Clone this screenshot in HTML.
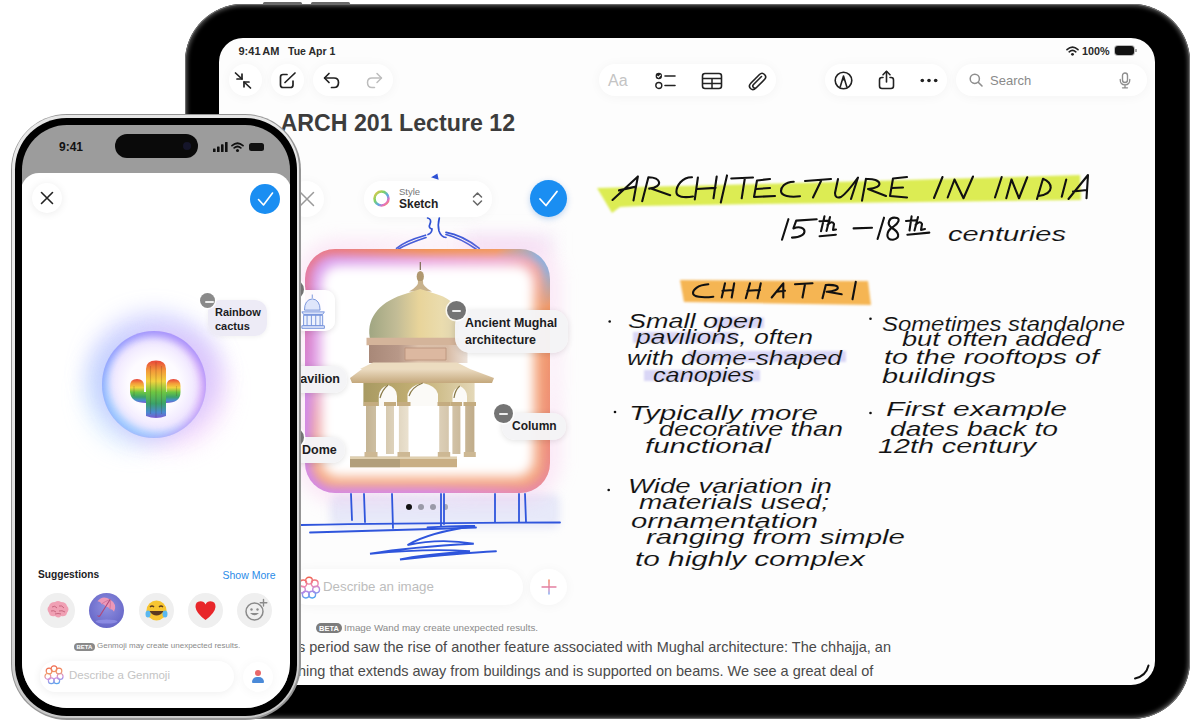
<!DOCTYPE html>
<html><head><meta charset="utf-8">
<style>
*{box-sizing:border-box;margin:0;padding:0}
html,body{width:1200px;height:725px;overflow:hidden;background:#fff;font-family:"Liberation Sans",sans-serif}
.a{position:absolute}
#ipad{position:absolute;left:185px;top:4px;width:1005px;height:715px;border-radius:58px;background:#000;box-shadow:inset 0 0 0 0.8px #777, inset 0 0 4px 2px #5c5c5c}
#screen{position:absolute;left:219px;top:38px;width:936px;height:647px;border-radius:24px;background:#fdfdfd;overflow:hidden}
.pg{position:absolute;left:-219px;top:-38px;width:1200px;height:725px}
#iphone{position:absolute;left:10.7px;top:113.7px;width:290.3px;height:606.1px;border-radius:56px;background:#959595}
#irim{position:absolute;left:1.6px;top:1.8px;right:1.8px;bottom:2px;border-radius:54px;background:linear-gradient(180deg,#e6e6e6,#ececec 30%,#dedede 70%,#c8c8c8)}
#ibez{position:absolute;left:4.6px;top:4.8px;right:4.1px;bottom:4px;border-radius:51.5px;background:#000}
#iscreen{position:absolute;left:11.6px;top:11.1px;width:267.4px;height:583.4px;border-radius:45px;background:#9c9c9c;overflow:hidden}
.pg2{position:absolute;left:-22.3px;top:-124.8px;width:1200px;height:725px}
.pill{position:absolute;background:#fff;border-radius:20px;box-shadow:0 1px 12px rgba(0,0,0,0.045)}
.t{position:absolute;white-space:nowrap;line-height:1}
svg{position:absolute;overflow:visible}
.lbl{position:absolute;background:rgba(244,244,246,0.97);border-radius:14px;box-shadow:0 1px 6px rgba(0,0,0,0.12);font-weight:bold;font-size:12px;color:#1c1c1e;white-space:nowrap;line-height:15px}
.minus{position:absolute;width:19px;height:19px;border-radius:50%;background:#747474;box-shadow:0 0 0 1.5px rgba(255,255,255,0.8)}
.minus:after{content:"";position:absolute;left:5px;top:8.5px;width:9px;height:2px;background:#eee;border-radius:1px}
.hw{position:absolute;white-space:nowrap;font-family:"Liberation Sans",sans-serif;font-style:italic;color:#111;line-height:1}
</style></head>
<body>
<!-- iPad -->
<div class="a" style="left:263px;top:2.2px;width:39px;height:3.5px;background:#6a6a6a;border-radius:1.5px"></div>
<div class="a" style="left:311px;top:2.2px;width:39px;height:3.5px;background:#6a6a6a;border-radius:1.5px"></div>
<div id="ipad"></div>
<div id="screen"><div class="pg">
  <!-- status bar -->
  <div class="t" style="left:238.5px;top:46px;font-size:11px;font-weight:bold;color:#2a2a2a">9:41<span style="letter-spacing:-0.5px">&#8239;</span>AM</div><div class="t" style="left:288px;top:46.3px;font-size:10.5px;font-weight:bold;color:#2a2a2a">Tue Apr 1</div>
  <svg style="left:1066px;top:46px" width="13" height="10" viewBox="0 0 13 10"><path d="M1 3.6 Q6.5 -1.2 12 3.6" stroke="#222" stroke-width="1.7" fill="none" stroke-linecap="round"/><path d="M3.2 5.8 Q6.5 3 9.8 5.8" stroke="#222" stroke-width="1.7" fill="none" stroke-linecap="round"/><circle cx="6.5" cy="8.3" r="1.4" fill="#222"/></svg>
  <div class="t" style="left:1082px;top:46px;font-size:10.8px;font-weight:bold;color:#2a2a2a">100%</div>
  <div class="a" style="left:1115px;top:46px;width:19px;height:9px;border-radius:3px;background:#111;box-shadow:0 0 0 1px #bbb"></div>
  <div class="a" style="left:1135px;top:49px;width:1.5px;height:3px;background:#aaa"></div>

  <!-- toolbar left -->
  <div class="pill" style="left:229px;top:64px;width:33px;height:32px;border-radius:16px"></div>
  <div class="pill" style="left:271px;top:64px;width:33px;height:32px;border-radius:16px"></div>
  <div class="pill" style="left:313px;top:64px;width:80px;height:32px;border-radius:16px"></div>
  <svg style="left:234px;top:72px" width="18" height="17" viewBox="0 0 18 17"><g stroke="#222" stroke-width="1.7" fill="none" stroke-linecap="round" stroke-linejoin="round"><path d="M1.5 1 L8 7"/><path d="M3 7 H8 V2.2"/><path d="M16.5 16 L10 10"/><path d="M10 14.8 V10 H15"/></g></svg>
  <svg style="left:279px;top:72px" width="18" height="17" viewBox="0 0 18 17"><g stroke="#222" stroke-width="1.7" fill="none" stroke-linecap="round" stroke-linejoin="round"><path d="M8 2.5 H4 Q1.5 2.5 1.5 5 V13 Q1.5 15.5 4 15.5 H11.5 Q14 15.5 14 13 V9"/><path d="M6 10.5 L16 1"/></g></svg>
  <svg style="left:323px;top:72px" width="18" height="17" viewBox="0 0 18 17"><g stroke="#222" stroke-width="1.7" fill="none" stroke-linecap="round" stroke-linejoin="round"><path d="M6 1.5 L1.5 6 L6 10.5"/><path d="M1.8 6 H11 Q15.5 6 15.5 10.5 Q15.5 15.5 11 15.5 H8.5"/></g></svg>
  <svg style="left:366px;top:72px" width="18" height="17" viewBox="0 0 18 17"><g stroke="#bdbdbd" stroke-width="1.5" fill="none" stroke-linecap="round" stroke-linejoin="round"><path d="M11 1.5 L15.5 6 L11 10.5"/><path d="M15.2 6 H6 Q1.5 6 1.5 10.5 Q1.5 15.5 6 15.5 H8.5"/></g></svg>

  <!-- toolbar middle -->
  <div class="pill" style="left:599px;top:64px;width:177px;height:32px;border-radius:16px"></div>
  <div class="t" style="left:608px;top:73px;font-size:16px;color:#c4c4c4">Aa</div>
  <svg style="left:655px;top:72px" width="22" height="18" viewBox="0 0 22 18"><circle cx="3.8" cy="4" r="3.2" fill="#222"/><path d="M2.2 4 L3.5 5.3 L5.6 2.8" stroke="#fff" stroke-width="1.1" fill="none"/><circle cx="3.8" cy="13.5" r="3" fill="none" stroke="#222" stroke-width="1.4"/><path d="M10 4 H20 M10 13.5 H20" stroke="#222" stroke-width="1.6" stroke-linecap="round"/></svg>
  <svg style="left:701px;top:72px" width="22" height="18" viewBox="0 0 22 18"><rect x="1.5" y="1.5" width="19" height="15" rx="2.5" fill="none" stroke="#222" stroke-width="1.6"/><path d="M1.5 6.5 H20.5 M1.5 11.5 H20.5 M11 6.5 V16.5" stroke="#222" stroke-width="1.5"/></svg>
  <svg style="left:747px;top:71px" width="20" height="20" viewBox="0 0 20 20"><path d="M14.5 5.5 L6.5 13.5 Q5 15 6.5 16.5 Q8 18 9.5 16.5 L17.5 8.5 Q20 6 17.5 3.5 Q15 1 12.5 3.5 L4 12 Q1 15 3.5 17.5 Q6 20 9 17" stroke="#222" stroke-width="1.6" fill="none" stroke-linecap="round"/></svg>

  <!-- toolbar right -->
  <div class="pill" style="left:825px;top:64px;width:122px;height:32px;border-radius:16px"></div>
  <svg style="left:834px;top:71px" width="19" height="19" viewBox="0 0 19 19"><circle cx="9.5" cy="9.5" r="8.3" fill="none" stroke="#222" stroke-width="1.6"/><path d="M6 16.5 L9.5 5 L13 16.5" fill="none" stroke="#222" stroke-width="1.6" stroke-linejoin="round"/><path d="M8.2 9.5 L9.5 5.5 L10.8 9.5 Z" fill="#222"/></svg>
  <svg style="left:878px;top:70px" width="17" height="20" viewBox="0 0 17 20"><g stroke="#222" stroke-width="1.6" fill="none" stroke-linecap="round" stroke-linejoin="round"><path d="M5 7.5 H3.8 Q1.5 7.5 1.5 10 V16 Q1.5 18.5 4 18.5 H13 Q15.5 18.5 15.5 16 V10 Q15.5 7.5 13.2 7.5 H12"/><path d="M8.5 12 V1.5"/><path d="M5 4.8 L8.5 1.3 L12 4.8"/></g></svg>
  <svg style="left:920px;top:78px" width="18" height="5" viewBox="0 0 18 5"><circle cx="2.3" cy="2.5" r="1.8" fill="#222"/><circle cx="9" cy="2.5" r="1.8" fill="#222"/><circle cx="15.7" cy="2.5" r="1.8" fill="#222"/></svg>

  <!-- search -->
  <div class="pill" style="left:956px;top:64px;width:191px;height:32px;border-radius:16px"></div>
  <svg style="left:969px;top:73px" width="14" height="14" viewBox="0 0 14 14"><circle cx="5.8" cy="5.8" r="4.6" fill="none" stroke="#8e8e8e" stroke-width="1.5"/><path d="M9.2 9.2 L13 13" stroke="#8e8e8e" stroke-width="1.6" stroke-linecap="round"/></svg>
  <div class="t" style="left:990px;top:74px;font-size:13px;color:#8a8a8a">Search</div>
  <svg style="left:1119px;top:72px" width="12" height="17" viewBox="0 0 12 17"><rect x="3.5" y="1" width="5" height="9.5" rx="2.5" fill="none" stroke="#8e8e8e" stroke-width="1.4"/><path d="M1.2 7.5 Q1.2 12.8 6 12.8 Q10.8 12.8 10.8 7.5 M6 12.8 V15.8 M3.5 15.8 H8.5" fill="none" stroke="#8e8e8e" stroke-width="1.3" stroke-linecap="round"/></svg>

  <!-- title -->
  <div class="t" style="left:280.5px;top:112.3px;font-size:23.2px;font-weight:bold;color:#3c3c3c">ARCH 201 Lecture 12</div>

    <!-- ===== Image wand ===== -->
  <!-- lavender wash -->
  <div class="a" style="left:330px;top:494px;width:230px;height:34px;background:rgba(190,195,240,0.35);filter:blur(4px);border-radius:8px"></div>
  <div class="a" style="left:465px;top:232px;width:90px;height:22px;background:rgba(235,205,240,0.35);filter:blur(8px)"></div>
  <!-- sketch lines above -->
  <svg style="left:380px;top:160px" width="120" height="100" viewBox="380 160 120 100"><g stroke="#2f52d6" stroke-width="1.7" fill="none" stroke-linecap="round">
    <path d="M434 177 L436.5 175.5 L437 178 Z" fill="#2f52d6" stroke-width="2.5"/>
    <path d="M427.6 218 Q432 219 430 224 Q428 228 432 229 Q432 233 428 234.5"/>
    <path d="M439.3 218 Q437.5 225 439 231 Q441 237 446 237.5"/>
    <path d="M396.5 248.3 Q405 241 425.5 235.2"/><path d="M398.5 249 Q408 243.5 426 237.5"/>
    <path d="M446 232.4 Q462 235 479.3 248.3"/><path d="M446 234.5 Q460 238 476 249"/>
  </g></svg>
  <!-- X button -->
  <div class="pill" style="left:288px;top:181px;width:36px;height:36px;border-radius:18px"></div>
  <svg style="left:299px;top:191px" width="16" height="16" viewBox="0 0 16 16"><path d="M1.5 1.5 L14.5 14.5 M14.5 1.5 L1.5 14.5" stroke="#9a9a9a" stroke-width="1.5" stroke-linecap="round"/></svg>
  <!-- style pill -->
  <div class="pill" style="left:364px;top:181px;width:128px;height:36px;border-radius:18px;background:rgba(255,255,255,0.96)"></div>
  <svg style="left:372px;top:189px" width="19" height="19" viewBox="0 0 19 19"><circle cx="9.5" cy="9.5" r="7" fill="none" stroke="url(#rg1)" stroke-width="2.6"/><defs><linearGradient id="rg1" x1="0" y1="0" x2="1" y2="1"><stop offset="0" stop-color="#f5c542"/><stop offset="0.35" stop-color="#7bd36a"/><stop offset="0.6" stop-color="#5aa9e6"/><stop offset="0.8" stop-color="#e96fc0"/><stop offset="1" stop-color="#f59a3a"/></linearGradient></defs></svg>
  <div class="t" style="left:399px;top:187px;font-size:9.5px;color:#777">Style</div>
  <div class="t" style="left:399px;top:198px;font-size:12px;font-weight:bold;color:#222">Sketch</div>
  <svg style="left:472px;top:191px" width="11" height="16" viewBox="0 0 11 16"><path d="M1.5 6 L5.5 2 L9.5 6 M1.5 10 L5.5 14 L9.5 10" stroke="#666" stroke-width="1.5" fill="none" stroke-linecap="round" stroke-linejoin="round"/></svg>
  <!-- blue check -->
  <div class="a" style="left:530px;top:180px;width:37px;height:37px;border-radius:50%;background:#1a8ef2;box-shadow:0 2px 6px rgba(0,90,200,0.25)"></div>
  <svg style="left:538px;top:189px" width="21" height="19" viewBox="0 0 21 19"><path d="M2 10 L8 16.5 L19 2.5" stroke="#fff" stroke-width="1.8" fill="none" stroke-linecap="round" stroke-linejoin="round"/></svg>

  <!-- card -->
  <div class="a" style="left:296px;top:238px;width:266px;height:266px;border-radius:42px;background:radial-gradient(closest-side,rgba(255,160,230,0) 80%,rgba(248,180,232,0.25) 100%);filter:blur(8px)"></div>
  <div class="a" style="left:305px;top:249px;width:245px;height:244px;border-radius:30px;overflow:hidden;background:conic-gradient(from 0deg,#f2944c 0deg,#f39a58 30deg,#8ab2e0 44deg,#90b0dc 50deg,#f09a6a 62deg,#ee8c7a 120deg,#e48cc0 150deg,#d88ae4 180deg,#d48ae6 220deg,#d08ae8 260deg,#e07ab0 300deg,#ec7c80 322deg,#f2944c 360deg)">
    <div class="a" style="left:6px;top:6px;width:233px;height:232px;border-radius:24px;filter:blur(4px);background:conic-gradient(from 0deg,#e8a0e0 0deg,#eea6cc 35deg,#f4a070 60deg,#f3a27e 120deg,#f6a880 180deg,#f5aa84 225deg,#e29ee2 270deg,#d89cec 320deg,#e8a0e0 360deg);"></div>
    <div class="a" style="left:20px;top:20px;width:205px;height:204px;border-radius:14px;background:#fff;box-shadow:0 0 7px 4px rgba(255,255,255,0.95);filter:blur(5px)"></div>
  </div>
  <!-- pavilion -->
  <svg style="left:340px;top:255px" width="160" height="215" viewBox="340 255 160 215">
    <defs>
      <linearGradient id="dome" x1="0" y1="0" x2="1" y2="0"><stop offset="0" stop-color="#a0a682"/><stop offset="0.3" stop-color="#c2bc96"/><stop offset="0.55" stop-color="#e8d49a"/><stop offset="0.8" stop-color="#eadcae"/><stop offset="1" stop-color="#dcd2b0"/></linearGradient>
      <linearGradient id="col" x1="0" y1="0" x2="1" y2="0"><stop offset="0" stop-color="#c4b494"/><stop offset="0.45" stop-color="#f0e8d8"/><stop offset="1" stop-color="#c0ac8a"/></linearGradient>
      <linearGradient id="chh" x1="0" y1="0" x2="0" y2="1"><stop offset="0" stop-color="#ecdcc2"/><stop offset="1" stop-color="#c4a87c"/></linearGradient>
      <linearGradient id="drum" x1="0" y1="0" x2="1" y2="0"><stop offset="0" stop-color="#a88878"/><stop offset="0.3" stop-color="#b89888"/><stop offset="0.5" stop-color="#dcc0aa"/><stop offset="0.8" stop-color="#d8bca6"/><stop offset="1" stop-color="#ece2da"/></linearGradient>
      <linearGradient id="arch" x1="0" y1="0" x2="1" y2="0"><stop offset="0" stop-color="#a89a62"/><stop offset="0.5" stop-color="#c4b074"/><stop offset="1" stop-color="#e4d8b8"/></linearGradient>
    </defs>
    <path d="M420.3 262 L420.3 270" stroke="#7a6a50" stroke-width="1.2"/>
    <ellipse cx="420.3" cy="276.5" rx="3.6" ry="5.5" fill="#b09870"/>
    <path d="M418 281 Q419 286 409 291.5 L432 291.5 Q422 286 423 281 Z" fill="#c8b28c"/>
    <path d="M370.6 341 C365 320 378 303 402 295 Q413 291.5 420.3 289 Q428 291.5 439 295 C462 303 463 320 456 338 Z" fill="url(#dome)"/>
    <path d="M366.5 337.8 H459 V345.2 H366.5 Z" fill="#d4b49a"/>
    <path d="M369 345 H467.5 V363 H369 Z" fill="url(#drum)"/>
    <path d="M405 348 H446 V360 H405 Z" fill="#dcb8a0" stroke="#b89078" stroke-width="0.8"/>
    <path d="M373 362.5 H457 L470 369 H360 Z" fill="#ecdcc0"/>
    <path d="M350 378 L362 369 H470 L494 378 L492 383 H352 Z" fill="url(#chh)"/>
    <path d="M363.4 383 H474.6 V406 H363.4 Z" fill="url(#arch)"/>
    <path d="M378.75 406 V396 Q379 388 388 385 Q397 388 397 396 V406 Z M407.5 406 V394 Q409 386 422.75 383 Q436.5 386 438 394 V406 Z M452.5 406 V396 Q453 389 459.75 386 Q466.5 389 467 396 V406 Z" fill="#fbfaf7"/>
    <path d="M388 385 Q382 390 380 398 M422.75 383 Q412 387 409 396 M459.75 386 Q455 390 454 398" stroke="#8a7a48" stroke-width="1.2" fill="none"/>
    <path d="M366 404 H376 V456 H366 Z M386 404 H394 V454 H386 Z M398.9 404 H408.5 V456 H398.9 Z M439.2 404 H448.8 V456 H439.2 Z M452.4 404 H460.4 V454 H452.4 Z M465.2 404 H474.4 V456 H465.2 Z" fill="url(#col)"/>
    <path d="M364 402 H378 V406 H364 Z M384 402 H396 V406 H384 Z M397 402 H410.5 V406 H397 Z M437.5 402 H450.5 V406 H437.5 Z M451 402 H462 V406 H451 Z M463.5 402 H476 V406 H463.5 Z" fill="#c4ac80"/>
    <path d="M364.5 452 H377.5 V457 H364.5 Z M397.5 452 H410 V457 H397.5 Z M437.8 452 H450.2 V457 H437.8 Z M463.8 452 H475.8 V457 H463.8 Z" fill="#cdb894"/>
    <path d="M350 456.8 H457 V467.3 H350 Z" fill="#c9ae84"/>
    <path d="M350 456.8 H400 V467.3 H350 Z" fill="#a89878" opacity="0.7"/>
    <path d="M350 456.8 H457 V459 H350 Z" fill="#e0d0b0"/>
  </svg>
  <!-- thumbnail -->
  <div class="a" style="left:294px;top:290px;width:41px;height:41px;border-radius:10px;background:rgba(255,255,255,0.94);box-shadow:0 1px 6px rgba(0,0,0,0.12)"></div>
  <svg style="left:301px;top:291px" width="26" height="40" viewBox="0 0 30 42"><g stroke="#6a8ad8" stroke-width="1" fill="#dfe6fb"><path d="M13 2 V6"/><path d="M4 20 Q4 8 13 7 Q22 8 22 20 Z"/><path d="M1 22 H27 L25 25 H3 Z"/><path d="M3 26 H25 V38 H3 Z" fill="#eef2fd"/><path d="M7 26 V38 M12 26 V38 M17 26 V38 M22 26 V38"/><path d="M1 38 H27 V41 H1 Z"/></g></svg>
  <!-- labels -->
  <div class="lbl" style="left:455px;top:310px;width:113px;height:43px;padding:5px 0 0 10px;border-radius:15px;font-size:12.4px;line-height:16.5px">Ancient Mughal<br>architecture</div>
  <div class="minus" style="left:447px;top:301px"></div>
  <div class="lbl" style="left:285px;top:366px;width:62px;height:27px;padding:6px 0 0 7px;border-radius:13px;font-size:12.5px">Pavilion</div>
  <div class="lbl" style="left:290px;top:437px;width:55px;height:26px;padding:6px 0 0 12px;border-radius:13px;font-size:12.5px">Dome</div>
  <div class="lbl" style="left:502px;top:413px;width:64px;height:27px;padding:6px 0 0 10px;border-radius:13px">Column</div>
  <div class="minus" style="left:494px;top:404px"></div>
  <div class="minus" style="left:285px;top:280px"></div>
  <div class="minus" style="left:285px;top:428px"></div>
  <!-- dots -->
  <div class="a" style="left:406px;top:504px;width:6px;height:6px;border-radius:50%;background:#111"></div>
  <div class="a" style="left:418px;top:504px;width:6px;height:6px;border-radius:50%;background:#9a9aa8"></div>
  <div class="a" style="left:430px;top:504px;width:6px;height:6px;border-radius:50%;background:#9a9aa8"></div>
  <div class="a" style="left:443px;top:504px;width:5px;height:6px;border-radius:50%;background:#a8a8b8"></div>
  <!-- sketch lines below -->
  <svg style="left:290px;top:490px" width="280" height="75" viewBox="0 0 280 75"><g stroke="#2f55dc" stroke-width="1.8" fill="none" stroke-linecap="round">
    <path d="M61 4 L62 30 M74 4 L75 32 M102 4 L103 38 M151 4 L151 36 M154 4 L154 34 M205 4 L205 32 M229 4 L229 32 M235 4 L236 32"/>
    <path d="M11 35 Q120 33 270 32.5"/><path d="M20 42.5 Q100 40 150 38.75 Q170 38 186 37.5"/>
    <path d="M137.5 37.5 Q165 35.5 185 36 Q140 42 117.5 55 Q150 48 183.75 53.75 Q120 57 80 63.75 Q140 58 180 61.25 Q130 65 110 69.5 Q170 63 206 61.25"/>
  </g></svg>
  <!-- describe pill -->
  <div class="pill" style="left:290px;top:569px;width:233px;height:36px;border-radius:18px"></div>
  <svg style="left:295px;top:574px" width="28" height="28" viewBox="0 0 28 28"><defs><linearGradient id="ai1" gradientUnits="userSpaceOnUse" x1="12" y1="3" x2="16" y2="25"><stop offset="0" stop-color="#f0604a"/><stop offset="0.4" stop-color="#f08ab0"/><stop offset="0.65" stop-color="#b08ae8"/><stop offset="1" stop-color="#40a8f0"/></linearGradient></defs><g fill="none" stroke="url(#ai1)" stroke-width="1.4"><circle cx="14.00" cy="6.70" r="3.4"/><circle cx="19.71" cy="9.45" r="3.4"/><circle cx="21.12" cy="15.62" r="3.4"/><circle cx="17.17" cy="20.58" r="3.4"/><circle cx="10.83" cy="20.58" r="3.4"/><circle cx="6.88" cy="15.62" r="3.4"/><circle cx="8.29" cy="9.45" r="3.4"/></g></svg>
  <div class="t" style="left:323px;top:579.5px;font-size:13.3px;color:#bdbdbd">Describe an image</div>
  <div class="pill" style="left:530px;top:569px;width:37px;height:36px;border-radius:18px"></div>
  <svg style="left:541px;top:579px" width="16" height="16" viewBox="0 0 16 16"><defs><linearGradient id="pl" x1="0" y1="0" x2="0" y2="1"><stop offset="0" stop-color="#f07850"/><stop offset="0.6" stop-color="#e080b0"/><stop offset="1" stop-color="#70a0f0"/></linearGradient></defs><path d="M8 1 V15 M1 8 H15" stroke="url(#pl)" stroke-width="1.3" stroke-linecap="round"/></svg>
  <!-- beta -->
  <div class="a" style="left:316px;top:623px;width:26px;height:10px;border-radius:5px;background:#7c7c7c"></div>
  <div class="t" style="left:319px;top:624.5px;font-size:7.5px;font-weight:bold;color:#fff">BETA</div>
  <div class="t" style="left:344px;top:622.5px;font-size:9.8px;color:#8a8a8a">Image Wand may create unexpected results.</div>

    <!-- ===== Notes handwriting ===== -->
  <svg style="left:0;top:0" width="1200" height="725" viewBox="0 0 1200 725">
    <defs><filter id="hb" x="-5%" y="-30%" width="110%" height="160%"><feGaussianBlur stdDeviation="1.2"/></filter></defs>
    <!-- highlights -->
    <path d="M597 188 L760 184 L1080 175 L1081 200 L760 204 L640 206 L620 207 L612 213 Z" fill="#dcec52" filter="url(#hb)"/>
    <path d="M680 280 L868 281 L871 305 L684 302 Z" fill="#f5b552" filter="url(#hb)"/>
    <g fill="#d9d6f6" filter="url(#hb)">
      <path d="M713 317.5 H764 V328 H713 Z"/>
      <path d="M633 332 H737 V343 H633 Z"/>
      <path d="M688 351 H846 V362 H688 Z"/>
      <path d="M644 370 H760 V381 H644 Z"/>
    </g>
    <g stroke="#111" stroke-width="2.1" fill="none" stroke-linecap="round" stroke-linejoin="round">
      <!-- ARCHITECTURE IN INDIA -->
      <path d="M612.5 200 L637.9 176.4 L633.5 200.4 M619 190.4 L634.8 186.9"/>
      <path d="M648.4 177.2 L642.2 201.3 M648.4 177.2 C661 177 664 187 649.2 188.6 M651 188.6 L670.2 195.2"/>
      <path d="M692 177.2 C682 177 676.4 186 676.4 192 C676.4 197 684 198 693 196.5"/>
      <path d="M697.9 177.5 L694.8 199.4 M716.7 176.5 L713.5 198.3 M696.9 189 L715.6 187.9"/>
      <path d="M727 175.4 L720.8 202.5"/>
      <path d="M731.25 178.5 L753 177.5 M744.8 178.5 L741.7 198.3"/>
      <path d="M770 179 L757 180.5 L754 197 L775 196 M756 189 L770 188"/>
      <path d="M793.75 181.7 C784 182 781 188 781 191 C781 196 790 197.5 800 196.25"/>
      <path d="M805 181 L831 179 M821 181 L813 197.5"/>
      <path d="M838 179 L835 193 Q835 199 841 197 Q847 193 858 177.5 L851 199"/>
      <path d="M866 178.75 L862 200.6 M866 179 C882 178 885 188 868 189 M868 189 L886 196"/>
      <path d="M907 177 L893 178.5 L890 196 L907 197.5 M892 188 L903 187.5"/>
      <path d="M942.5 177 L934 198"/>
      <path d="M954.5 179.5 L947.7 197.5 M954.5 179.5 L963.5 198.25 L973 176.5"/>
      <path d="M1001.7 177 L995 197.5"/>
      <path d="M1011.5 179.5 L1006.25 198.25 M1011.5 179.5 L1019 198.25 L1027.25 177.25"/>
      <path d="M1043 178.75 L1037 199 M1043 178.75 C1052 182.5 1056 193 1038.5 196"/>
      <path d="M1066.25 179.5 L1061.75 196.75"/>
      <path d="M1068.5 199 L1088 175 L1086.5 198.25 M1073 191.5 L1087 190"/>
      <!-- CHHATRI -->
      <path d="M708.3 284.2 C697 285 693 290 693 293 C693 297 702 298 713.3 296.7"/>
      <path d="M725 283.3 L721.7 297.5 M734.2 283.3 L731.7 297.5 M722.5 290.8 L733.3 290"/>
      <path d="M750 283.3 L745.8 298.3 M760.8 283.3 L757.5 298.3 M747.5 290.8 L760 290"/>
      <path d="M771.7 297.5 L783.3 283.3 L783.3 297.5 M776.7 291.7 L785 290.8"/>
      <path d="M795 284.2 L812.5 283.3 M805 284.2 L802.5 297.5"/>
      <path d="M825.8 285 L822.5 298.3 M825.8 285 C841.7 284.2 841.7 290.8 826.7 291.7 M827.5 291.7 L841.7 294.2"/>
      <path d="M855.8 281.7 L852.5 299.2"/>
      <!-- 15th - 18th -->
      <path d="M788.4 219.2 L782 239.7"/>
      <path d="M816.7 219.2 L796.2 220.6 L793.4 228.4 C806.8 223.4 810 237.6 792 237.6"/>
      <path d="M824.5 216.3 L821 231.2 M819.5 221.3 L829.5 220.6 M830 217 L826.5 231 M827.5 225 Q832 220 834 224 L833 230 L836 229.5 M819.6 236.2 L835.9 234.7"/>
      <path d="M853.6 228.4 L872 227.7"/>
      <path d="M884 217.7 L877.6 239"/>
      <path d="M897 218 C889 216 886 224 892 228 C899 232 901 238 893 239.7 C885 240 886 231 893 227 C899 223 900 219 897 218"/>
      <path d="M911.6 216.3 L909.5 230.5 M906 221 L916 220.3 M918 217 L914.5 230.5 M915.5 225 Q920 220 922 224 L921 230 L925 229 M907.4 234.7 L929.3 232.6"/>

    </g>
    <g fill="#111">
      <circle cx="609.7" cy="321.5" r="1.3"/><circle cx="615" cy="412" r="1.3"/><circle cx="608.7" cy="490" r="1.3"/>
      <circle cx="870.5" cy="318.8" r="1.3"/><circle cx="870.5" cy="413" r="1.3"/>
    </g>
    <g font-family="Liberation Sans" font-style="italic" font-size="21" fill="#111" stroke="#fcfcfc" stroke-width="0.1" lengthAdjust="spacingAndGlyphs">
      <text x="948" y="241" textLength="118" lengthAdjust="spacingAndGlyphs" font-size="20">centuries</text>

      <text x="628" y="328" textLength="135" lengthAdjust="spacingAndGlyphs">Small open</text>
      <text x="636" y="344" textLength="177" lengthAdjust="spacingAndGlyphs">pavilions, often</text>
      <text x="627" y="365" textLength="215" lengthAdjust="spacingAndGlyphs">with dome-shaped</text>
      <text x="653" y="382" textLength="101" lengthAdjust="spacingAndGlyphs">canopies</text>
      <text x="629" y="420" textLength="189" lengthAdjust="spacingAndGlyphs">Typically more</text>
      <text x="659" y="436" textLength="184" lengthAdjust="spacingAndGlyphs">decorative than</text>
      <text x="645" y="453" textLength="126" lengthAdjust="spacingAndGlyphs">functional</text>
      <text x="628" y="493" textLength="204" lengthAdjust="spacingAndGlyphs">Wide variation in</text>
      <text x="639" y="509" textLength="190" lengthAdjust="spacingAndGlyphs">materials used;</text>
      <text x="631" y="528" textLength="187" lengthAdjust="spacingAndGlyphs">ornamentation</text>
      <text x="646" y="544" textLength="259" lengthAdjust="spacingAndGlyphs">ranging from simple</text>
      <text x="635" y="566" textLength="230" lengthAdjust="spacingAndGlyphs">to highly complex</text>

      <text x="882" y="331" textLength="243" lengthAdjust="spacingAndGlyphs">Sometimes standalone</text>
      <text x="902" y="346" textLength="189" lengthAdjust="spacingAndGlyphs">but often added</text>
      <text x="884" y="364" textLength="215" lengthAdjust="spacingAndGlyphs">to the rooftops of</text>
      <text x="882" y="383" textLength="114" lengthAdjust="spacingAndGlyphs">buildings</text>
      <text x="886" y="416" textLength="181" lengthAdjust="spacingAndGlyphs">First example</text>
      <text x="890" y="436" textLength="168" lengthAdjust="spacingAndGlyphs">dates back to</text>
      <text x="878" y="453" textLength="158" lengthAdjust="spacingAndGlyphs">12th century</text>
    </g>
  </svg>


  <svg style="left:1130px;top:660px" width="25" height="25" viewBox="1130 660 25 25"><path d="M1148.5 665.5 Q1146 676 1135 678.5" stroke="#111" stroke-width="2" fill="none" stroke-linecap="round"/></svg>
  <!-- body text -->
  <div class="t" style="left:298px;top:640px;font-size:14.5px;color:#4a4a4a">s period saw the rise of another feature associated with Mughal architecture: The chhajja, an</div>
  <div class="t" style="left:298px;top:663.5px;font-size:14.5px;color:#4a4a4a">hing that extends away from buildings and is supported on beams. We see a great deal of</div>
</div></div>

<!-- iPhone -->
<div id="iphone"><div id="irim"></div><div id="ibez"></div><div id="iscreen"><div class="pg2">
  <div class="t" style="left:59px;top:141px;font-size:12px;font-weight:bold;color:#111">9:41</div>
  <div class="a" style="left:115px;top:134px;width:83px;height:24px;border-radius:12px;background:#0a0a0a"></div>
  <div class="a" style="left:183px;top:142px;width:8px;height:8px;border-radius:50%;background:#15152a"></div>
  <!-- status icons -->
  <svg style="left:213px;top:142px" width="15" height="10" viewBox="0 0 15 10"><g fill="#111"><rect x="0" y="6.5" width="2.6" height="3.5" rx="0.6"/><rect x="4" y="4.5" width="2.6" height="5.5" rx="0.6"/><rect x="8" y="2.3" width="2.6" height="7.7" rx="0.6"/><rect x="12" y="0" width="2.6" height="10" rx="0.6"/></g></svg>
  <svg style="left:231px;top:142px" width="13" height="10" viewBox="0 0 13 10"><path d="M1 3.6 Q6.5 -1.2 12 3.6" stroke="#111" stroke-width="1.8" fill="none" stroke-linecap="round"/><path d="M3.2 5.9 Q6.5 3 9.8 5.9" stroke="#111" stroke-width="1.8" fill="none" stroke-linecap="round"/><circle cx="6.5" cy="8.5" r="1.5" fill="#111"/></svg>
  <div class="a" style="left:249px;top:143px;width:15px;height:8px;border-radius:2.5px;background:#111"></div>
  <!-- sheet -->
  <div class="a" style="left:21px;top:173px;width:270px;height:560px;border-radius:18px;background:#fff"></div>
  <div class="a" style="left:32px;top:183px;width:30px;height:30px;border-radius:50%;background:#fff;box-shadow:0 1px 8px rgba(0,0,0,0.08)"></div>
  <svg style="left:40px;top:191px" width="14" height="14" viewBox="0 0 14 14"><path d="M1.5 1.5 L12.5 12.5 M12.5 1.5 L1.5 12.5" stroke="#222" stroke-width="1.6" stroke-linecap="round"/></svg>
  <div class="a" style="left:250px;top:184px;width:30px;height:30px;border-radius:50%;background:#1a8ef2"></div>
  <svg style="left:257px;top:191px" width="17" height="16" viewBox="0 0 17 16"><path d="M1.5 8.5 L6.5 14 L15.5 2" stroke="#fff" stroke-width="1.6" fill="none" stroke-linecap="round" stroke-linejoin="round"/></svg>
  <!-- cactus bubble -->
  <div class="a" style="left:88px;top:312px;width:132px;height:124px;border-radius:50%;background:rgba(120,125,255,0.30);filter:blur(11px)"></div>
  <div class="a" style="left:110px;top:330px;width:118px;height:120px;border-radius:50%;background:rgba(235,150,245,0.26);filter:blur(11px)"></div>
  <div class="a" style="left:84px;top:340px;width:100px;height:110px;border-radius:50%;background:rgba(140,200,255,0.24);filter:blur(11px)"></div>
  <div class="a" style="left:102px;top:331px;width:104px;height:107px;border-radius:50%;background:radial-gradient(closest-side,#fdfbff 50%,#f0e8ff 80%,#d8d0ff 100%);box-shadow:inset 0 5px 8px rgba(110,120,255,0.55),inset -5px 2px 9px rgba(240,140,240,0.55),inset 5px -5px 9px rgba(110,200,255,0.6)"></div>
  <svg style="left:126px;top:356px" width="60" height="66" viewBox="126 356 60 66">
    <defs><linearGradient id="rb" x1="0" y1="0" x2="0" y2="1"><stop offset="0" stop-color="#e8453a"/><stop offset="0.18" stop-color="#f39a3a"/><stop offset="0.36" stop-color="#f2d23e"/><stop offset="0.55" stop-color="#6cc642"/><stop offset="0.75" stop-color="#3aa26a"/><stop offset="0.9" stop-color="#4a8ad0"/><stop offset="1" stop-color="#7a5ad0"/></linearGradient></defs>
    <path d="M146 416 L146 369 Q146 360.5 156 360.5 Q166 360.5 166 369 L166 416 Q156 420 146 416 Z" fill="url(#rb)"/>
    <path d="M146 403 Q131 403 130 392 L130 386 Q130 379 137 379 Q144 379 144 386 L144 392 L146 392 Z" fill="url(#rb)"/>
    <path d="M166 403 Q180.5 403 180.5 392 L180.5 386 Q180.5 379 173.5 379 Q166.5 379 166.5 386 L166.5 392 L166 392 Z" fill="url(#rb)"/>
    <path d="M150.5 366 V414 M156 362 V417 M161.5 366 V414 M134 386 V396 M176.5 386 V396" stroke="rgba(60,30,0,0.18)" stroke-width="1.1"/>
  </svg>
  <!-- rainbow cactus label -->
  <div class="a" style="left:208px;top:300px;width:59px;height:36px;border-radius:12px;background:rgba(236,234,246,0.97);box-shadow:0 1px 5px rgba(0,0,0,0.06)"></div>
  <div class="t" style="left:215px;top:305.5px;font-size:11px;line-height:14px;font-weight:bold;color:#1c1c1e">Rainbow<br>cactus</div>
  <div class="minus" style="left:200px;top:293px;width:15px;height:15px;background:#8a8a8a"></div>
  <!-- suggestions -->
  <div class="t" style="left:38px;top:570.5px;font-size:10.2px;font-weight:bold;color:#1c1c1e">Suggestions</div>
  <div class="t" style="left:222.5px;top:570px;font-size:10.5px;color:#2a8be8">Show More</div>
  <div class="a" style="left:40px;top:593px;width:35px;height:35px;border-radius:50%;background:#efefef"></div>
  <div class="a" style="left:89px;top:593px;width:35px;height:35px;border-radius:50%;background:radial-gradient(circle at 50% 40%,#9090e0,#5a5ac0)"></div>
  <div class="a" style="left:139px;top:593px;width:35px;height:35px;border-radius:50%;background:#efefef"></div>
  <div class="a" style="left:188px;top:593px;width:35px;height:35px;border-radius:50%;background:#efefef"></div>
  <div class="a" style="left:237px;top:593px;width:35px;height:35px;border-radius:50%;background:#efefef"></div>
  <!-- brain -->
  <svg style="left:46px;top:600px" width="24" height="21" viewBox="0 0 24 21"><path d="M3 13 Q0 9 3 6 Q4 2 9 2 Q12 0 15 2 Q20 2 21 6 Q24 9 21 13 Q20 17 15 16 Q13 19 9 16 Q4 17 3 13 Z" fill="#f0a0b4"/><path d="M6 7 Q9 5 11 8 M13 6 Q16 5 18 8 M5 11 Q8 10 10 12 M13 11 Q16 10 19 12 M9 14 Q12 13 15 14" stroke="#c86880" stroke-width="1" fill="none"/></svg>
  <!-- umbrella -->
  <svg style="left:89px;top:593px" width="35" height="35" viewBox="0 0 35 35"><ellipse cx="17.5" cy="28.5" rx="11" ry="2" fill="rgba(150,150,235,0.7)"/><g transform="translate(2.5 4) rotate(32 16 10) scale(0.75)"><path d="M6 14 Q7 3 19 3 Q31 3 32 14 Q28.5 12 25.5 14 Q22 12 19 14 Q16 12 12.5 14 Q9.5 12 6 14 Z" fill="#ec98b8"/><path d="M19 3 Q15 8 12.5 14 M19 3 Q23 8 25.5 14" stroke="#c86a94" stroke-width="0.9" fill="none"/><path d="M19 3 V28 Q19 31 16 30" stroke="#b04878" stroke-width="1.4" fill="none"/></g></svg>
  <!-- laughing -->
  <svg style="left:144px;top:598px" width="25" height="25" viewBox="0 0 25 25"><circle cx="12.5" cy="12.5" r="10" fill="#f7c532"/><path d="M5 13 Q12.5 22 20 13 Z" fill="#5a3a20"/><path d="M6 9 Q8 7 10 9 M15 9 Q17 7 19 9" stroke="#5a3a20" stroke-width="1.4" fill="none"/><ellipse cx="4" cy="16" rx="2.5" ry="3.5" fill="#5ab8f0"/><ellipse cx="21" cy="16" rx="2.5" ry="3.5" fill="#5ab8f0"/></svg>
  <!-- heart -->
  <svg style="left:194px;top:600px" width="23" height="21" viewBox="0 0 23 21"><path d="M11.5 20 Q2 13 1.5 7 Q1.2 1.5 6.5 1.2 Q10 1.2 11.5 4.5 Q13 1.2 16.5 1.2 Q21.8 1.5 21.5 7 Q21 13 11.5 20 Z" fill="#e8262a"/></svg>
  <!-- smiley plus -->
  <svg style="left:244px;top:598px" width="24" height="24" viewBox="0 0 24 24"><circle cx="10.5" cy="13.5" r="8.5" fill="none" stroke="#8a8a8a" stroke-width="1.5"/><circle cx="7.5" cy="11.5" r="1.2" fill="#8a8a8a"/><circle cx="13.5" cy="11.5" r="1.2" fill="#8a8a8a"/><path d="M6 15 Q10.5 19.5 15 15 Z" fill="#8a8a8a"/><path d="M19.5 1.5 V8 M16.2 4.8 H22.8" stroke="#8a8a8a" stroke-width="1.4" stroke-linecap="round"/></svg>
  <!-- beta -->
  <div class="a" style="left:74px;top:643px;width:21px;height:8px;border-radius:4px;background:#8a8a8a"></div>
  <div class="t" style="left:76.5px;top:644px;font-size:6px;font-weight:bold;color:#fff">BETA</div>
  <div class="t" style="left:97px;top:642.5px;font-size:8px;color:#8a8a8a">Genmoji may create unexpected results.</div>
  <!-- describe genmoji -->
  <div class="pill" style="left:40px;top:661px;width:194px;height:31px;border-radius:16px;box-shadow:0 1px 8px rgba(0,0,0,0.07)"></div>
  <svg style="left:42px;top:663px" width="24" height="24" viewBox="0 0 24 24"><defs><linearGradient id="ai2" gradientUnits="userSpaceOnUse" x1="10" y1="2" x2="14" y2="22"><stop offset="0" stop-color="#f0604a"/><stop offset="0.4" stop-color="#f09a6a"/><stop offset="0.65" stop-color="#d090e0"/><stop offset="1" stop-color="#40a8f0"/></linearGradient></defs><g fill="none" stroke="url(#ai2)" stroke-width="1.2"><circle cx="12.00" cy="5.70" r="2.9"/><circle cx="16.93" cy="8.07" r="2.9"/><circle cx="18.14" cy="13.40" r="2.9"/><circle cx="14.73" cy="17.68" r="2.9"/><circle cx="9.27" cy="17.68" r="2.9"/><circle cx="5.86" cy="13.40" r="2.9"/><circle cx="7.07" cy="8.07" r="2.9"/></g></svg>
  <div class="t" style="left:69px;top:670px;font-size:11.5px;color:#c4c4c4">Describe a Genmoji</div>
  <div class="pill" style="left:243px;top:662px;width:30px;height:30px;border-radius:50%"></div>
  <div class="a" style="left:255px;top:670px;width:6px;height:6px;border-radius:50%;background:#e8686a"></div>
  <div class="a" style="left:252px;top:677px;width:12px;height:6px;border-radius:5px 5px 1px 1px;background:#4a8ad8"></div>

</div></div></div>
</body></html>
